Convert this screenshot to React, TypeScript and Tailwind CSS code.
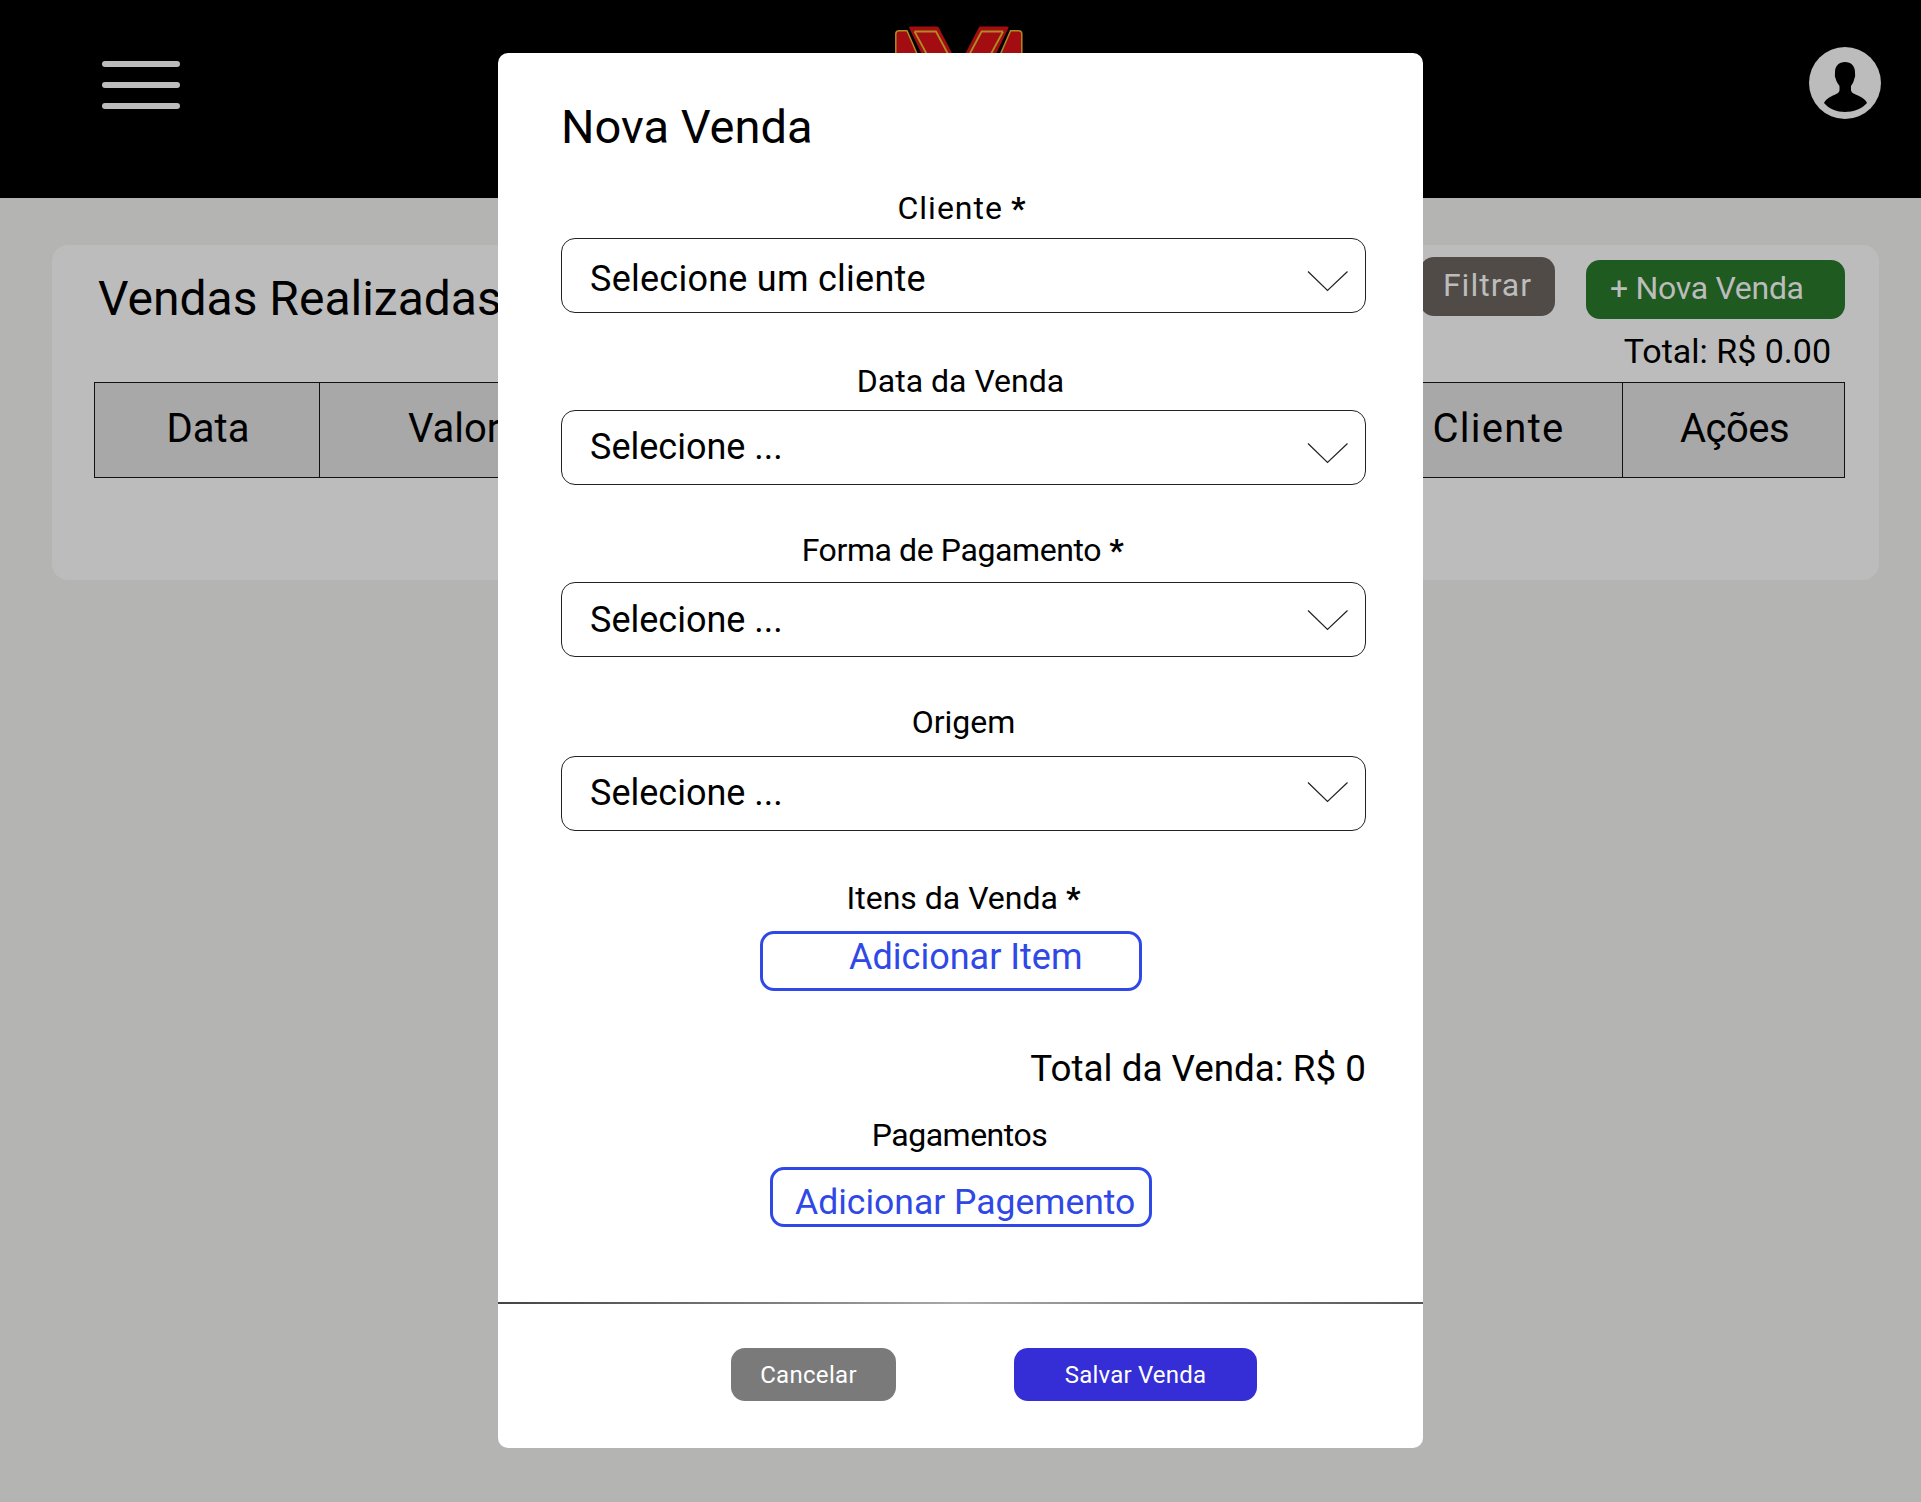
import React from "react";

const font = { fontFamily: '"Roboto", "Liberation Sans", sans-serif' };

function Chevron() {
  return (
    <svg width="42" height="22" viewBox="0 0 42 22" fill="none" className="shrink-0">
      <path d="M1 1.5 L20.5 20.5 L40.5 1.5" stroke="#222" strokeWidth="1.2" />
    </svg>
  );
}

function LogoHalf() {
  return (
    <g>
      <path d="M0.8 60 V8 Q0.8 4.8 4 4.8 H12 L36 60 Z" fill="#a30d12" stroke="#b08a22" strokeWidth="1.5" />
      <path d="M14 1.5 Q14 0.5 16 0.5 H42 Q44 0.5 44 2 L74 60 H42 Z" fill="#a30d12" />
      <path d="M19.5 5.5 H41 L70 60 M19.5 5.5 L49 60" fill="none" stroke="#b08a22" strokeWidth="1.8" />
    </g>
  );
}

function Field({ label, star, value, labelClass, boxClass, textClass, chevronClass }: { label: string; star?: boolean; value: string; labelClass: string; boxClass: string; textClass: string; chevronClass: string }) {
  return (
    <div className={boxClass}>
      <div className={`text-center text-[32px] leading-[38px] text-black ${labelClass}`}>
        {label}
        {star && <span className="ml-2 font-bold">*</span>}
      </div>
      <div className="flex h-[75px] items-center justify-between rounded-[14px] border border-[#222] pl-7 pr-[16px]">
        <span className={`text-[36px] leading-[44px] text-black ${textClass}`}>{value}</span>
        <span className={chevronClass}><Chevron /></span>
      </div>
    </div>
  );
}

export default function App() {
  return (
    <div style={font} className="relative h-[1502px] w-[1921px] overflow-hidden bg-[#b4b4b2]">
      <header className="flex h-[198px] items-start justify-between bg-black pl-[102px] pr-10">
        <div className="mt-[61px] flex w-[78px] flex-col gap-[15px]">
          <div className="h-[6px] rounded-full bg-[#bcbcbc]" />
          <div className="h-[6px] rounded-full bg-[#bcbcbc]" />
          <div className="h-[6px] rounded-full bg-[#bcbcbc]" />
        </div>
        <svg width="128" height="60" viewBox="0 0 128 60" className="mt-[26px] ml-[-72px]">
          <LogoHalf />
          <g transform="translate(127.6 0) scale(-1 1)">
            <LogoHalf />
          </g>
        </svg>
        <div className="mt-[47px]">
          <svg width="72" height="72" viewBox="0 0 72 72">
            <circle cx="36" cy="36" r="36" fill="#bcbcbc" />
            <path d="M36 15 C30 15 26 19 26 25 C26 28 25.5 30 26.5 31 C27 34 29 37 30.5 39 V43 C30.5 46 27 47 23 49 C19 51 16 53 15 56 C20 62 28 65 36 65 C44 65 53 62 58 56 C57 53 54 51 50 49 C46 47 42 46 42 43 V39 C43.5 37 45 34 45.5 31 C46.5 30 46 28 46 25 C46 19 42 15 36 15 Z" fill="#000" />
          </svg>
        </div>
      </header>

      <main className="px-[52px] pt-[47px]">
        <section className="h-[335px] w-[1827px] rounded-[16px] bg-[#bcbcbc] pl-[42px] pr-[34px]">
          <div className="flex h-[137px] justify-between">
            <h1 className="mt-[24px] ml-[4px] text-[48px] leading-[60px] font-normal text-black">Vendas Realizadas</h1>
            <div className="flex flex-col items-end">
              <div className="flex items-start gap-[31px] pt-[12px]">
                <button className="flex h-[59px] w-[135px] items-center justify-center rounded-[14px] bg-[#504b46] pb-[4px] text-[32px] tracking-[1px] text-[#bcbcbc]">Filtrar</button>
                <button className="mt-[3px] flex h-[59px] w-[259px] items-center rounded-[14px] bg-[#1f5a20] pb-[4px] pl-6 text-[32px] tracking-[-0.3px] text-[#bcbcbc]">+ Nova Venda</button>
              </div>
              <div className="mt-[10px] mr-[14px] text-[34px] leading-[44px] text-black">Total: R$ 0.00</div>
            </div>
          </div>
          <div className="grid h-[96px] grid-cols-[225px_1053px_250px_223px] border border-[#111] bg-[#a8a8a8] text-[40px] text-black">
            <div className="flex items-center justify-center border-r border-[#111] pb-[2px] pl-[2px]">Data</div>
            <div className="flex items-center pb-[2px] pl-[88px]">Valor</div>
            <div className="flex items-center justify-center border-r border-[#111] pb-[2px] pl-[2px] tracking-[1.3px]">Cliente</div>
            <div className="flex items-center justify-center pb-[2px] tracking-[-0.5px]">Ações</div>
          </div>
        </section>
      </main>

      <div className="absolute top-[53px] left-[498px] h-[1395px] w-[925px] rounded-[10px] bg-white">
        <div className="pr-[57px] pl-[63px]">
          <h2 className="pt-[44px] text-[47px] leading-[60px] font-normal text-black">Nova Venda</h2>
          <Field label="Cliente" star value="Selecione um cliente" boxClass="mt-[32px]" labelClass="mb-[11px] mr-[3px] tracking-[1px]" textClass="mt-[6px] tracking-[0.25px]" chevronClass="mt-[10px]" />
          <Field label="Data da Venda" value="Selecione ..." boxClass="mt-[49px]" labelClass="mb-[10px] mr-[6px]" textClass="mt-[-1px]" chevronClass="mt-[10px]" />
          <Field label="Forma de Pagamento" star value="Selecione ..." boxClass="mt-[46px]" labelClass="mb-[13px] mr-[2px] tracking-[-0.4px]" textClass="" chevronClass="mt-[1px]" />
          <Field label="Origem" value="Selecione ..." boxClass="mt-[46px]" labelClass="mb-[15px]" textClass="mt-[-1px]" chevronClass="mt-[-4px]" />
          <div className="mt-[48px] text-center text-[32px] leading-[38px] text-black">Itens da Venda<span className="ml-2 font-bold">*</span></div>
          <div className="mt-[14px] flex justify-center">
            <button className="mr-[25px] flex h-[60px] w-[382px] justify-start rounded-[14px] border-[3px] border-[#2f48e6] pl-[86px] text-[36px] leading-[46px] text-[#2f48e6]">Adicionar Item</button>
          </div>
          <div className="mt-[55px] text-right text-[36.8px] leading-[46px] text-black">Total da Venda: R$ 0</div>
          <div className="mt-[24px] mr-[8px] text-center text-[32px] leading-[38px] tracking-[-0.5px] text-black">Pagamentos</div>
          <div className="mt-[13px] flex justify-center">
            <button className="mr-[5px] flex h-[60px] w-[382px] justify-start rounded-[14px] border-[3px] border-[#2f48e6] pl-[22px] text-[35.5px] leading-[64px] text-[#2f48e6]">Adicionar Pagemento</button>
          </div>
        </div>
        <div className="mt-[75px] h-[2px] bg-linear-to-r from-[#444] via-[#aaa] to-[#555]" />
        <div className="flex items-start pt-[44px] pl-[233px]">
          <button className="h-[53px] w-[165px] rounded-[14px] bg-[#7a7a7a] pr-[10px] text-[24px] tracking-[0.3px] text-white">Cancelar</button>
          <button className="ml-[118px] h-[53px] w-[243px] rounded-[14px] bg-[#352ed6] text-[24px] tracking-[0.2px] text-white">Salvar Venda</button>
        </div>
      </div>
    </div>
  );
}
